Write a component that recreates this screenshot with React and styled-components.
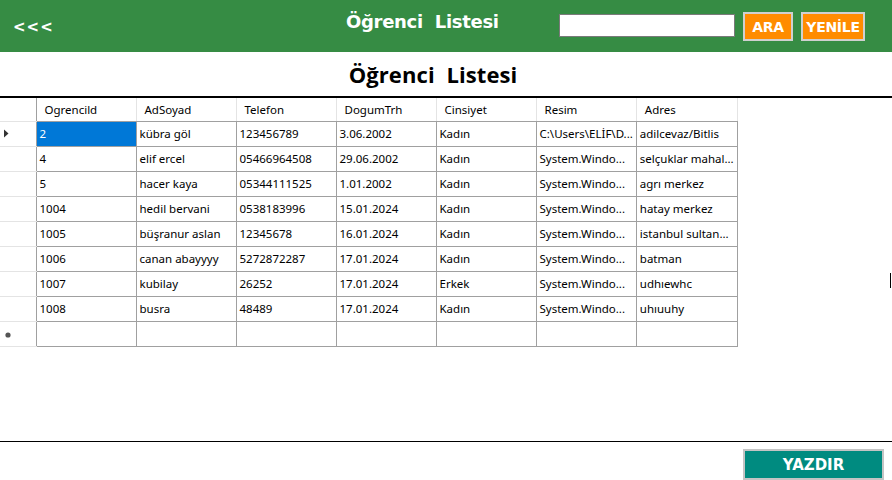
import React from 'react';
import styled, { createGlobalStyle } from 'styled-components';

const GlobalStyle = createGlobalStyle`
  html, body {
    margin: 0;
    padding: 0;
    background: #fff;
  }
  * {
    box-sizing: border-box;
  }
`;

const Page = styled.div`
  position: relative;
  width: 892px;
  height: 480px;
  display: flex;
  flex-direction: column;
  overflow: hidden;
  background: #fff;
  font-family: 'Noto Sans', 'Open Sans', sans-serif;
`;

const TopBar = styled.div`
  height: 52px;
  background: #368c44;
  display: flex;
  align-items: center;
  padding: 0 0 0 13px;
`;

const Back = styled.span`
  width: 333px;
  color: #fff;
  font-family: 'DejaVu Sans', sans-serif;
  font-weight: bold;
  font-size: 15px;
  letter-spacing: 1px;
  margin-top: 1px;
`;

const BarTitle = styled.h1`
  margin: 0 0 9px 0;
  color: #fff;
  font-family: 'DejaVu Sans', sans-serif;
  font-weight: bold;
  font-size: 18px;
  white-space: pre;
  letter-spacing: -0.3px;
`;

const SearchArea = styled.div`
  margin-left: auto;
  display: flex;
  align-items: flex-start;
  gap: 8px;
  padding-right: 27px;
  padding-top: 1px;
`;

const SearchInput = styled.input`
  width: 176px;
  height: 23px;
  margin-top: 2px;
  border: 1px solid #7a7a7a;
  background: #fff;
  outline: none;
`;

const OrangeButton = styled.button`
  width: ${p => p.$w}px;
  height: 29px;
  background: #ff8c00;
  border: 2px solid #d0d0d0;
  color: #fff;
  font-family: 'DejaVu Sans', sans-serif;
  font-weight: bold;
  font-size: 14px;
  padding: 0;
  letter-spacing: -0.3px;
`;

const TitleRow = styled.div`
  height: 46px;
  border-bottom: 2px solid #000;
  display: flex;
  justify-content: center;
  align-items: center;
`;

const PageTitle = styled.h2`
  margin: 0 26px 0 0;
  font-family: 'Open Sans', sans-serif;
  font-weight: 700;
  font-size: 22px;
  color: #000;
  white-space: pre;
  letter-spacing: 0.1px;
`;

const GridArea = styled.div`
  height: 344px;
  border-bottom: 1px solid #000;
`;

const Table = styled.table`
  border-collapse: collapse;
  table-layout: fixed;
  font-size: 11.5px;
  color: #000;
`;

const HeadCell = styled.th`
  width: ${p => (p.$corner ? 36 : 100)}px;
  height: 23px;
  padding: 0 0 0 8px;
  text-align: left;
  font-weight: normal;
  border-right: 1px solid #e4e4e4;
  border-bottom: 1px solid #a0a0a0;
  white-space: nowrap;
  overflow: hidden;
  &:nth-child(2) {
    border-left: 1px solid #a0a0a0;
  }
  &:first-child {
    border-bottom-color: #e4e4e4;
    border-right: none;
  }
`;

const RowHead = styled.td`
  width: 36px;
  height: 25px;
  padding: 0 0 0 3px;
  border-bottom: 1px solid #e4e4e4;
  border-right: 1px solid #a0a0a0;
  vertical-align: middle;
  color: #333;
  font-size: 10px;
`;

const Cell = styled.td`
  width: 100px;
  height: 25px;
  padding: 0 3px;
  border-right: 1px solid #a0a0a0;
  border-bottom: 1px solid #a0a0a0;
  background: ${p => (p.$selected ? '#0078d7' : '#fff')};
  color: ${p => (p.$selected ? '#fff' : '#000')};
  white-space: nowrap;
  overflow: hidden;
`;

const Footer = styled.div`
  flex: 1;
  display: flex;
  justify-content: flex-end;
  align-items: flex-start;
  padding: 7px 8px 0 0;
`;

const PrintButton = styled.button`
  width: 141px;
  height: 31px;
  background: #008b80;
  border: 2px solid #c4c4c4;
  color: #fff;
  font-family: 'DejaVu Sans', sans-serif;
  font-weight: bold;
  font-size: 15px;
  padding: 0;
`;

const EdgeMark = styled.div`
  position: absolute;
  right: 1px;
  top: 273px;
  width: 1px;
  height: 15px;
  background: #000;
`;

const columns = ['Ogrencild', 'AdSoyad', 'Telefon', 'DogumTrh', 'Cinsiyet', 'Resim', 'Adres'];

const rows = [
  ['2', 'kübra göl', '123456789', '3.06.2002', 'Kadın', 'C:\\Users\\ELİF\\D...', 'adilcevaz/Bitlis'],
  ['4', 'elif ercel', '05466964508', '29.06.2002', 'Kadın', 'System.Windo...', 'selçuklar mahal...'],
  ['5', 'hacer kaya', '05344111525', '1.01.2002', 'Kadın', 'System.Windo...', 'agrı merkez'],
  ['1004', 'hedil bervani', '0538183996', '15.01.2024', 'Kadın', 'System.Windo...', 'hatay merkez'],
  ['1005', 'büşranur aslan', '12345678', '16.01.2024', 'Kadın', 'System.Windo...', 'istanbul sultan...'],
  ['1006', 'canan abayyyy', '5272872287', '17.01.2024', 'Kadın', 'System.Windo...', 'batman'],
  ['1007', 'kubilay', '26252', '17.01.2024', 'Erkek', 'System.Windo...', 'udhıewhc'],
  ['1008', 'busra', '48489', '17.01.2024', 'Kadın', 'System.Windo...', 'uhıuuhy'],
];

const Arrow = () => (
  <svg width="6" height="9" viewBox="0 0 6 9">
    <path d="M1 0.5 L5.5 4.5 L1 8.5 Z" fill="#333" />
  </svg>
);

const Star = () => (
  <svg width="6" height="6" viewBox="0 0 6 6" style={{ marginLeft: 2 }}>
    <circle cx="3" cy="3" r="2.6" fill="#555" />
  </svg>
);

const App = () => (
  <Page>
    <GlobalStyle />
    <TopBar>
      <Back>&lt;&lt;&lt;</Back>
      <BarTitle>Öğrenci  Listesi</BarTitle>
      <SearchArea>
        <SearchInput />
        <OrangeButton $w={50}>ARA</OrangeButton>
        <OrangeButton $w={64}>YENİLE</OrangeButton>
      </SearchArea>
    </TopBar>
    <TitleRow>
      <PageTitle>Öğrenci  Listesi</PageTitle>
    </TitleRow>
    <GridArea>
      <Table>
        <thead>
          <tr>
            <HeadCell $corner />
            {columns.map(c => (
              <HeadCell key={c}>{c}</HeadCell>
            ))}
          </tr>
        </thead>
        <tbody>
          {rows.map((r, i) => (
            <tr key={r[0]}>
              <RowHead>{i === 0 ? <Arrow /> : null}</RowHead>
              {r.map((v, j) => (
                <Cell key={j} $selected={i === 0 && j === 0}>{v}</Cell>
              ))}
            </tr>
          ))}
          <tr>
            <RowHead><Star /></RowHead>
            {columns.map(c => (
              <Cell key={c} />
            ))}
          </tr>
        </tbody>
      </Table>
    </GridArea>
    <Footer>
      <PrintButton>YAZDIR</PrintButton>
    </Footer>
    <EdgeMark />
  </Page>
);

export default App;
